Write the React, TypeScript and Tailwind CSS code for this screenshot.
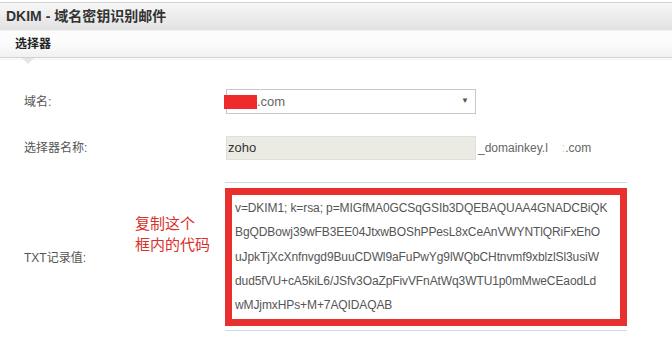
import React from "react";

const lines = [
  "v=DKIM1; k=rsa; p=MIGfMA0GCSqGSIb3DQEBAQUAA4GNADCBiQK",
  "BgQDBowj39wFB3EE04JtxwBOShPPesL8xCeAnVWYNTlQRiFxEhO",
  "uJpkTjXcXnfnvgd9BuuCDWl9aFuPwYg9lWQbCHtnvmf9xblzlSl3usiW",
  "dud5fVU+cA5kiL6/JSfv3OaZpFivVFnAtWq3WTU1p0mMweCEaodLd",
  "wMJjmxHPs+M+7AQIDAQAB",
];

export default function App() {
  return (
    <div
      className="w-[672px] h-[344px] bg-white overflow-hidden relative"
      style={{ fontFamily: '"Liberation Sans", "Noto Sans CJK SC", sans-serif' }}
    >
      <div className="h-[2px] bg-white" />
      {/* title bar */}
      <div className="h-[28px] border-t border-[#d2d2d2] bg-gradient-to-b from-[#f7f7f7] to-[#e2e2e2] flex items-center pl-[6px]">
        <span className="text-[14px] font-bold text-[#333]">DKIM - 域名密钥识别邮件</span>
      </div>
      {/* tab bar */}
      <div className="h-[28px] border-t border-[#f0f0f0] border-b border-b-[#d0d0d0] bg-gradient-to-b from-[#fdfdfd] via-[#fbfbfb] to-[#f1f1f1] flex items-center pl-[15px] relative">
        <span className="text-[12px] font-bold text-[#222]">选择器</span>
        <div className="absolute left-[22px] top-[27px] w-0 h-0 border-l-[6px] border-r-[6px] border-t-[6px] border-l-transparent border-r-transparent border-t-[#e6e6e6]" />
      </div>
      <div className="h-[2px] border-b border-[#f3f3f3]" />

      {/* form */}
      <div className="pl-[24px] pt-[29px] flex flex-col">
        {/* row 1 */}
        <div className="flex items-center h-[25px]">
          <div className="w-[202px] text-[12px] text-[#555]">域名:</div>
          <div className="relative w-[250px] h-[25px] border border-[#c8c8c8] bg-white flex items-center">
            <div className="absolute left-[-3px] top-[5px] w-[33px] h-[14px] bg-[#ee2a2a]" />
            <span className="ml-[30px] text-[13px] text-[#666]">.com</span>
            <span className="absolute right-[6px] top-[5px] text-[8px] text-[#555]">▼</span>
          </div>
        </div>
        {/* row 2 */}
        <div className="flex items-center h-[24px] mt-[22px]">
          <div className="w-[202px] text-[12px] text-[#555]">选择器名称:</div>
          <div className="w-[250px] h-[24px] bg-[#ebebe4] border border-[#dedede] flex items-center pl-[1px]">
            <span className="text-[13px] text-[#333]">zoho</span>
          </div>
          <span className="ml-[2px] text-[12px] text-[#666]">_domainkey.l</span>
          <span className="ml-[14px] text-[12px] text-[#ccc]">:</span>
          <span className="text-[12px] text-[#666]">.com</span>
        </div>
        {/* row 3 */}
        <div className="flex items-center mt-[22px] relative">
          <div className="w-[201px] text-[12px] text-[#555] pt-[2px]">TXT记录值:</div>
          <div className="w-[402px] h-[149px] border-t border-b border-[#c9dce8] pt-[5px]">
            <div className="h-[138px] border-[7px] border-[#e8302f] bg-white pl-[3px] pt-[1px]">
              {lines.map((l) => (
                <div key={l} className="h-[24.3px] leading-[24.3px] text-[12px] text-[#555] whitespace-nowrap tracking-[-0.1px]">
                  {l}
                </div>
              ))}
            </div>
          </div>
          <div className="absolute left-[111px] top-[31px] text-[15px] leading-[21px] text-[#d9302c]">
            复制这个
            <br />
            框内的代码
          </div>
        </div>
      </div>
    </div>
  );
}
